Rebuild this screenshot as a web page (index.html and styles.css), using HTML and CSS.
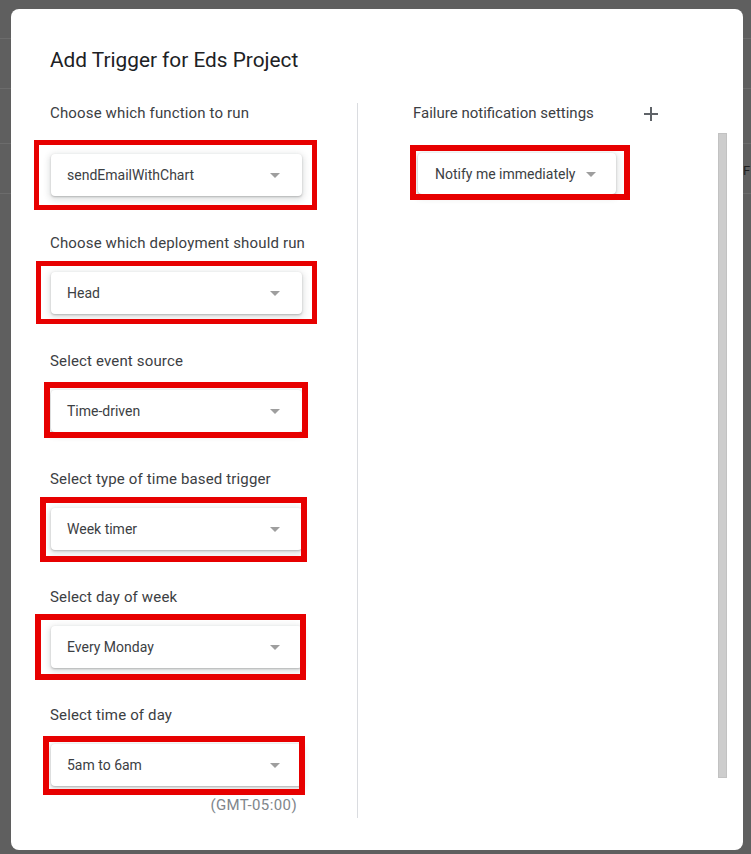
FILE: index.html
```html
<!DOCTYPE html>
<html lang="en">
<head>
<meta charset="utf-8">
<title>Add Trigger for Eds Project</title>
<link rel="stylesheet" href="styles.css">
</head>
<body>
<div class="page">
  <div class="page-header"></div>
  <div class="page-toolbar"></div>
  <div class="page-table">
    <div class="page-row"><span class="page-cell">F</span></div>
  </div>
</div>

<div class="dialog" role="dialog" aria-labelledby="dlg-title">
  <h1 class="dialog-title" id="dlg-title">Add Trigger for Eds Project</h1>
  <div class="columns">
    <div class="col-left">
      <div class="field field-first">
        <div class="field-label">Choose which function to run</div>
        <div class="mark mark-1"><div class="select"><span class="select-value">sendEmailWithChart</span><span class="arrow"></span></div></div>
      </div>
      <div class="field">
        <div class="field-label">Choose which deployment should run</div>
        <div class="mark mark-2"><div class="select"><span class="select-value">Head</span><span class="arrow"></span></div></div>
      </div>
      <div class="field">
        <div class="field-label">Select event source</div>
        <div class="mark mark-3"><div class="select"><span class="select-value">Time-driven</span><span class="arrow"></span></div></div>
      </div>
      <div class="field">
        <div class="field-label">Select type of time based trigger</div>
        <div class="mark mark-4"><div class="select"><span class="select-value">Week timer</span><span class="arrow"></span></div></div>
      </div>
      <div class="field">
        <div class="field-label">Select day of week</div>
        <div class="mark mark-5"><div class="select"><span class="select-value">Every Monday</span><span class="arrow"></span></div></div>
      </div>
      <div class="field field-last">
        <div class="field-label">Select time of day</div>
        <div class="mark mark-6"><div class="select"><span class="select-value">5am to 6am</span><span class="arrow"></span></div></div>
        <div class="tz-note">(GMT-05:00)</div>
      </div>
    </div>
    <div class="col-right">
      <div class="right-content">
        <div class="right-header">
          <span class="field-label right-label">Failure notification settings</span>
          <svg class="plus" width="14" height="14" viewBox="0 0 14 14" aria-label="Add"><path d="M7 0v14M0 7h14" stroke="#5f6368" stroke-width="2" fill="none"/></svg>
        </div>
        <div class="mark mark-r"><div class="select select-auto"><span class="select-value">Notify me immediately</span><span class="arrow arrow-inline"></span></div></div>
      </div>
      <div class="scroll-track"></div>
    </div>
  </div>
</div>
</body>
</html>
```
FILE: styles.css
```css
html, body {
  margin: 0;
  padding: 0;
}
body {
  background: #5f5f5f;
  font-family: Roboto, "Liberation Sans", Arial, sans-serif;
  width: 751px;
  height: 854px;
  overflow: hidden;
}

/* dimmed page behind the dialog */
.page-header {
  height: 38px;
  border-bottom: 1px solid #6c6c6c;
}
.page-toolbar {
  height: 49px;
  border-bottom: 1px solid #6c6c6c;
}
.page-table {
  margin-top: 54px;
}
.page-row {
  height: 51px;
  box-sizing: border-box;
  border-top: 1px solid #6c6c6c;
  border-bottom: 1px solid #6c6c6c;
  display: flex;
  align-items: center;
  padding-left: 743px;
  padding-top: 3px;
}
.page-cell {
  font-size: 13px;
  color: #1e1e1e;
  white-space: nowrap;
}

/* dialog */
.dialog {
  position: fixed;
  left: 11px;
  top: 9px;
  width: 732px;
  height: 841px;
  box-sizing: border-box;
  background: #fff;
  border-radius: 8px;
  padding: 39px 0 32px 39px;
  display: flex;
  flex-direction: column;
}
.dialog-title {
  margin: 0;
  font-size: 20.8px;
  line-height: 24px;
  font-weight: 400;
  color: #202124;
}
.columns {
  margin-top: 31px;
  flex: 1;
  display: flex;
}
.col-left {
  width: 307px;
  flex: none;
}
.field {
  margin-bottom: 37px;
}
.field-last {
  margin-bottom: 0;
}
.field-label {
  display: block;
  font-size: 15px;
  line-height: 20px;
  letter-spacing: 0.15px;
  color: #3c4043;
  margin-bottom: 19px;
}
.field-first .field-label {
  margin-bottom: 31px;
}

/* select box */
.mark {
  position: relative;
  width: 251px;
  margin-left: 1px;
}
.mark::after {
  content: "";
  position: absolute;
  border: 5px solid #e70000;
  pointer-events: none;
}
.mark-1::after { top: -14px; right: -15px; bottom: -14px; left: -17px; }
.mark-2::after { top: -11px; right: -15px; bottom: -10px; left: -15px; }
.mark-3::after { top: -8px; right: -6px; bottom: -6px; left: -7px; border-width: 6px; }
.mark-4::after { top: -11px; right: -5px; bottom: -12px; left: -11px; border-width: 6px; }
.mark-5::after { top: -12px; right: -4px; bottom: -12px; left: -16px; border-width: 6px; }
.mark-6::after { top: -8px; right: -3px; bottom: -9px; left: -8px; border-width: 6px; }
.mark-r::after { top: -8px; right: -14px; bottom: -6px; left: -8px; border-width: 6px; }

.select {
  height: 42px;
  box-sizing: border-box;
  background: #fff;
  border-radius: 4px;
  box-shadow: 0 1px 2px rgba(60, 64, 67, 0.3), 0 2px 6px 2px rgba(60, 64, 67, 0.15);
  display: flex;
  align-items: center;
  justify-content: space-between;
  padding: 0 22px 0 16px;
}
.select-value {
  font-size: 14px;
  color: #3c4043;
  white-space: nowrap;
}
.arrow {
  width: 0;
  height: 0;
  border-left: 5px solid transparent;
  border-right: 5px solid transparent;
  border-top: 5px solid #9e9e9e;
  margin-top: 1px;
}

.tz-note {
  margin-top: 11px;
  font-size: 15px;
  line-height: 16px;
  letter-spacing: 0.4px;
  color: #80868b;
  text-align: right;
  padding-right: 60px;
}

/* right column */
.col-right {
  flex: 1;
  border-left: 1px solid #dadce0;
  display: flex;
}
.right-content {
  flex: 1;
  padding-left: 55px;
}
.right-header {
  width: 245px;
  height: 20px;
  display: flex;
  align-items: center;
  justify-content: space-between;
}
.right-header .right-label {
  margin-bottom: 0;
  letter-spacing: 0;
}
.plus {
  display: block;
  margin-top: 2px;
}
.mark-r {
  display: inline-block;
  width: auto;
  margin-top: 30px;
  margin-left: 5px;
}
.select-auto {
  height: 41px;
  padding: 0 20px 0 17px;
  justify-content: flex-start;
}
.arrow-inline {
  margin-left: 11px;
}
.scroll-track {
  width: 9px;
  height: 645px;
  margin-top: 30px;
  margin-right: 16px;
  box-sizing: border-box;
  background: #cdcdcd;
  border: 1px solid #c2c2c2;
}
```
